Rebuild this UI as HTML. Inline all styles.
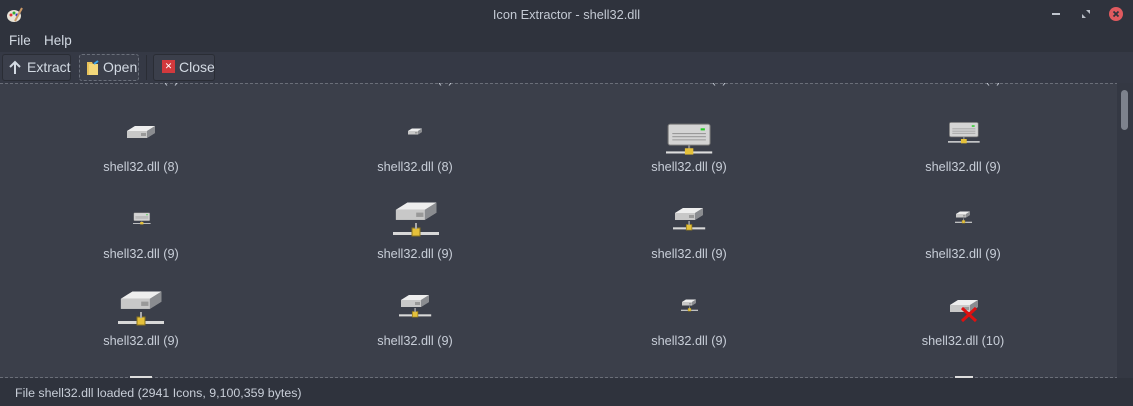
<!DOCTYPE html>
<html><head><meta charset="utf-8"><style>
*{margin:0;padding:0;box-sizing:border-box}
body{width:1133px;height:406px;overflow:hidden;background:#2f333d;font-family:"Liberation Sans",sans-serif;color:#d3dae3;position:relative}
.a{position:absolute}
.t{font-size:13.5px;white-space:nowrap}
.btn{position:absolute;top:54px;height:27px;background:#3b3f4b;border:1px solid #2a2d35;border-radius:3px;font-size:14px;line-height:25px;color:#d3dae3}
.lbl{position:absolute;width:200px;text-align:center;font-size:12.7px;color:#c8ced8}
</style></head><body>
<svg class="a" style="left:6px;top:6px" width="18" height="18" viewBox="0 0 18 18"><ellipse cx="8" cy="10" rx="7" ry="6" fill="#e8e4d8"/><circle cx="5" cy="9" r="1.5" fill="#d33"/><circle cx="8" cy="7" r="1.5" fill="#3a3"/><circle cx="11" cy="9" r="1.5" fill="#33c"/><path d="M9 15 L16 2" stroke="#c96" stroke-width="2"/></svg>
<div class="a t" style="left:0;width:1133px;top:7px;text-align:center;color:#c3c9d3;font-size:12.8px">Icon Extractor - shell32.dll</div>
<div class="a" style="left:1052px;top:13px;width:8px;height:2px;background:#c0c5ce"></div>
<svg class="a" style="left:1081px;top:9px" width="10" height="10"><path d="M5 1h4v4zM1 5v4h4z" fill="#b8bdc6"/></svg>
<div class="a" style="left:1109px;top:7px;width:14px;height:14px;border-radius:7px;background:#e05a5f"></div>
<svg class="a" style="left:1109px;top:7px" width="14" height="14"><path d="M4.5 4.5l5 5M9.5 4.5l-5 5" stroke="#2f333d" stroke-width="1.8"/></svg>
<div class="a t" style="left:9px;top:33px">File</div>
<div class="a t" style="left:44px;top:33px">Help</div>
<div class="a" style="left:0;top:52px;width:1133px;height:31px;background:#353945"></div>
<div class="btn" style="left:2px;width:69px"><svg class="a" style="left:6px;top:5px" width="12" height="15"><path d="M6 14V2M1 7l5-5 5 5" stroke="#d3dae3" stroke-width="2" fill="none"/></svg><span style="position:absolute;left:24px">Extract</span></div>
<div class="btn" style="left:79px;width:60px;border:1px dashed #6a6f7a"><svg class="a" style="left:6px;top:4px" width="14" height="17"><path d="M1 3h5l1 2h5v11H1z" fill="#e8c25a"/><path d="M3 5h9v11H3z" fill="#f2d77a"/><path d="M12 2l-4 3" stroke="#3aa3e8" stroke-width="2"/></svg><span style="position:absolute;left:23px">Open</span></div>
<div class="a" style="left:146px;top:55px;width:1px;height:25px;background:#2a2d35"></div>
<div class="btn" style="left:153px;width:62px"><div class="a" style="left:8px;top:5px;width:13px;height:13px;background:#d2393d;color:#fff;font-size:9px;line-height:13px;text-align:center">✕</div><span style="position:absolute;left:25px">Close</span></div>
<div class="a" style="left:0;top:83px;width:1133px;height:295px;background:#3b3f4a;overflow:hidden">
<div class="a" style="left:0;top:0;width:1118px;border-top:1px dashed #6a6e78"></div>
<div class="a" style="left:0;top:294px;width:1118px;border-top:1px dashed #6a6e78"></div>
<div class="a" style="left:1117px;top:0;width:16px;height:295px;background:#343843"></div>
<div class="a" style="left:1121px;top:7px;width:7px;height:40px;border-radius:4px;background:#7d828d"></div>
<svg class="a" style="left:0;top:0" width="1117" height="295">
<defs>
<g id="drv"><path d="M2 6 L10 1 L30 1 L30 8 L22 13 L2 13 Z" fill="#9a9ca0"/><path d="M2 6 L10 1 L30 1 L22 6 Z" fill="#eeeeee"/><path d="M2 6h20v7H2z" fill="#c8c8c8"/><path d="M22 6l8-5v7l-8 5z" fill="#8a8c90"/><rect x="16" y="8" width="5" height="3" fill="#999"/></g>
<g id="net"><rect x="0" y="29" width="46" height="3" fill="#d8d8d8"/><rect x="19" y="25" width="8" height="8" fill="#e5c13a" stroke="#8a7420" stroke-width="1"/><rect x="22" y="20" width="2" height="6" fill="#aaa"/></g>
<g id="srv"><rect x="2" y="2" width="40" height="20" rx="2" fill="#d4d4d4" stroke="#777"/><path d="M6 11h32M6 14h32M6 17h32" stroke="#999"/><rect x="33" y="6" width="4" height="2" fill="#2c2"/><rect x="21" y="22" width="2" height="5" fill="#888"/><rect x="0" y="28" width="44" height="2" fill="#ddd"/><rect x="18" y="25" width="8" height="6" fill="#e5c13a"/></g>
</defs>
<use href="#drv" transform="translate(125,42)"/>
<use href="#drv" transform="translate(407,45) scale(.5)"/>
<use href="#srv" transform="translate(666,39) scale(1.05)"/>
<use href="#srv" transform="translate(948,38) scale(.72)"/>
<use href="#srv" transform="translate(133,129) scale(.4)"/>
<use href="#drv" transform="translate(393,118) scale(1.45)"/><use href="#net" transform="translate(393,120)"/>
<use href="#drv" transform="translate(673,124) scale(1)"/><use href="#net" transform="translate(673,124) scale(.7)"/>
<use href="#drv" transform="translate(955,128) scale(.5)"/><use href="#net" transform="translate(955,128) scale(.37)"/>
<use href="#drv" transform="translate(118,207) scale(1.45)"/><use href="#net" transform="translate(118,209)"/>
<use href="#drv" transform="translate(399,211) scale(1)"/><use href="#net" transform="translate(399,211) scale(.7)"/>
<use href="#drv" transform="translate(681,216) scale(.5)"/><use href="#net" transform="translate(681,216) scale(.37)"/>
<use href="#drv" transform="translate(948,216) scale(1)"/><path d="M962 225l14 13M976 225l-14 13" stroke="#e01010" stroke-width="3"/>
<rect x="130" y="293" width="22" height="2" fill="#ddd"/><rect x="955" y="293" width="18" height="2" fill="#ddd"/>
</svg>
<div class="lbl" style="left:41px;top:-11px">shell32.dll (8)</div>
<div class="lbl" style="left:315px;top:-11px">shell32.dll (8)</div>
<div class="lbl" style="left:589px;top:-11px">shell32.dll (8)</div>
<div class="lbl" style="left:863px;top:-11px">shell32.dll (8)</div>
<div class="lbl" style="left:41px;top:77px">shell32.dll (8)</div>
<div class="lbl" style="left:315px;top:77px">shell32.dll (8)</div>
<div class="lbl" style="left:589px;top:77px">shell32.dll (9)</div>
<div class="lbl" style="left:863px;top:77px">shell32.dll (9)</div>
<div class="lbl" style="left:41px;top:164px">shell32.dll (9)</div>
<div class="lbl" style="left:315px;top:164px">shell32.dll (9)</div>
<div class="lbl" style="left:589px;top:164px">shell32.dll (9)</div>
<div class="lbl" style="left:863px;top:164px">shell32.dll (9)</div>
<div class="lbl" style="left:41px;top:251px">shell32.dll (9)</div>
<div class="lbl" style="left:315px;top:251px">shell32.dll (9)</div>
<div class="lbl" style="left:589px;top:251px">shell32.dll (9)</div>
<div class="lbl" style="left:863px;top:251px">shell32.dll (10)</div>
</div>
<div class="a t" style="left:15px;top:386px;color:#c8ced8;font-size:12.4px">File shell32.dll loaded (2941 Icons, 9,100,359 bytes)</div>
</body></html>
